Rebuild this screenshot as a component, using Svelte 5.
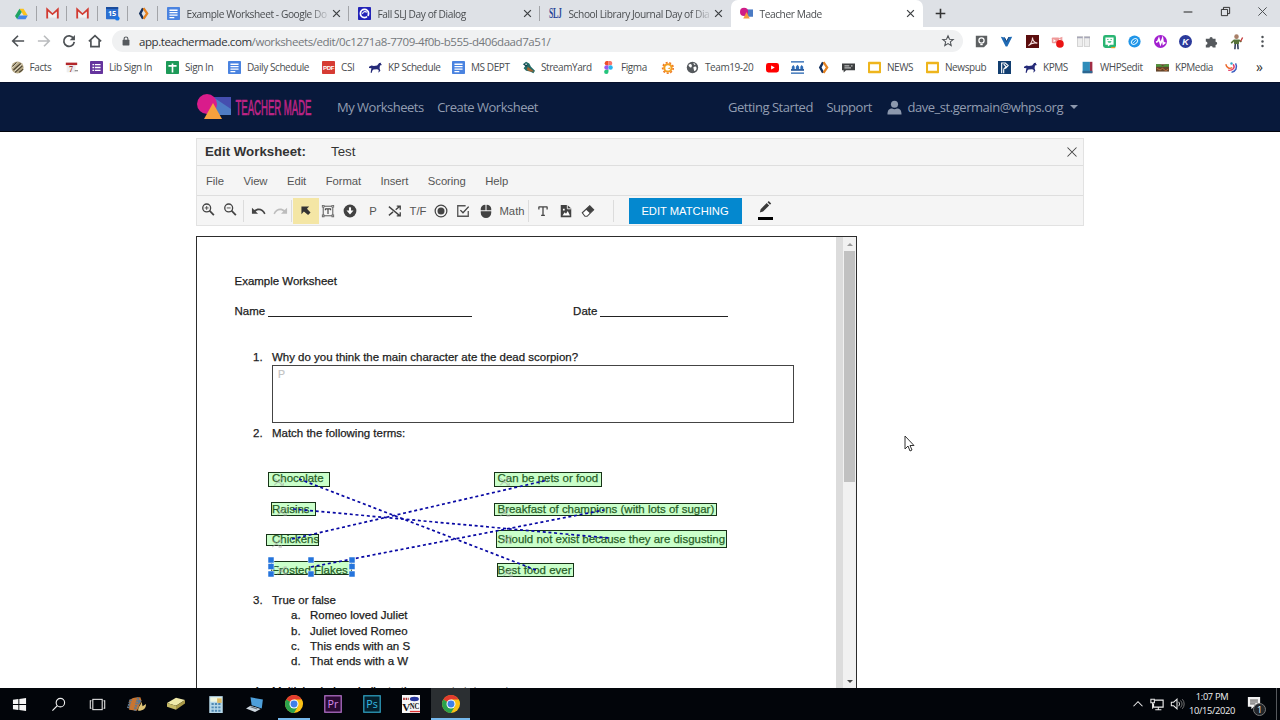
<script lang="ts">
	type Item = { icon?: string; label?: string; w: number; size?: number };

	const doc = '<rect width="16" height="16" rx="1" fill="#4a83e0"/><path d="M3 4h10M3 7h10M3 10h10M3 13h6" stroke="#fff" stroke-width="1.6"/>';
	const gmail = '<path d="M1.500 14V3L8 9l6.500-6v11" fill="none" stroke="#d23a31" stroke-width="2.300"/><path d="M3 13V6l5 4 5-4v7" fill="#f1f1f1"/>';
	const horse = '<path d="M0 7l3-1.500 3 .5 4-.5 2.500-3L15 2l-.5 1.500L16 5l-2.500.5L13 9l1 3-2.500 2.500.3-2L12 11l-2-.8-4.500.3L4 12l-.5 2.500H2l.5-3.500L3 9 0 8.500z" fill="#252a78"/>';
	const slides = '<rect y="1" width="16" height="14" rx="1" fill="#eeb51d"/><rect x="2.500" y="4" width="11" height="8" fill="#fff"/>';
	const orbit = '<path d="M7.500 1.500L4 8l3.500 6.500" fill="none" stroke="#14305e" stroke-width="3"/><path d="M8 1.500L12.500 8 8 14.500" fill="none" stroke="#e58220" stroke-width="2.800"/>';
	const shapes = '<rect x="7" y="3" width="9" height="9" fill="#4b7bc4"/><circle cx="5" cy="6" r="5" fill="#cf1c87"/><path d="M8 6l4 8H4z" fill="#f49a3e"/>';
	const chrome = '<circle cx="8" cy="8" r="8" fill="#fbc116"/><path d="M8 8L1.100 4A8 8 0 0 1 14.900 4z" fill="#e33b2e"/><path d="M8 8L1.100 4A8 8 0 0 0 8 16l3.500-6z" fill="#2ba24c"/><path d="M8 4h6.900L16 8H8z" fill="#fbc116"/><circle cx="8" cy="8" r="4" fill="#fff"/><circle cx="8" cy="8" r="3.100" fill="#3f7fe8"/>';

	const icons: Record<string, string> = {
		doc, gmail, horse, slides, orbit, shapes, chrome,
		drive: '<path d="M5.500 2h5l5.200 8.500h-5z" fill="#fbc31c"/><path d="M5.500 2L0 11l2.700 4L8.300 6z" fill="#1fa463"/><path d="M5.300 10.500h10.400L13 15H2.700z" fill="#4285e8"/>',
		calendar: '<rect width="15" height="15" rx="1" fill="#2c6fd0"/><rect y="0" width="15" height="2.500" fill="#1a4c9c"/><text x="7.500" y="11.500" font-family="Open Sans, sans-serif" font-size="9" font-weight="700" fill="#fff" text-anchor="middle">15</text><circle cx="14" cy="14" r="2.700" fill="#1875e8"/>',
		swirl: '<rect width="16" height="16" rx="1" fill="#2323b8"/><circle cx="8" cy="8" r="5" fill="none" stroke="#fff" stroke-width="2.200"/><path d="M5.500 8.500C6 5.500 9 5 11 6.500" fill="none" stroke="#fff" stroke-width="1.300"/><path d="M11 10l4 3-3 2z" fill="#2323b8"/>',
		slj: '<text transform="translate(0 14) scale(.55 1)" font-family="Liberation Serif, serif" font-size="17" font-weight="700" fill="#2b4698">SLJ</text>',
		facts: '<circle cx="8" cy="8" r="7.500" fill="#b9ab88"/><path d="M2 7l5-5M3 11L12 3M5 14l9-8M10 14l5-4" stroke="#4a4232" stroke-width="1.500"/><path d="M1 9l7-7M4 13l9-9" stroke="#f4efdf" stroke-width="1"/>',
		seven: '<rect x="2" y="3" width="11" height="11" fill="#eee"/><rect x="1" y="2" width="14" height="3" fill="#b3262b"/><text x="5" y="13" font-family="Liberation Serif, serif" font-size="10" font-weight="700" fill="#933">7</text><path d="M12 12h4" stroke="#555"/>',
		form: '<rect width="16" height="16" rx="1" fill="#65349d"/><path d="M3 4.500h2M3 8h2M3 11.500h2M6 4.500h7M6 8h7M6 11.500h7" stroke="#fff" stroke-width="1.700"/>',
		sheet: '<rect width="16" height="16" rx="1" fill="#1d9a58"/><path d="M3 6h10M8 3v11" stroke="#fff" stroke-width="2"/>',
		pdf: '<rect width="16" height="16" rx="1" fill="#d63b33"/><text x="8" y="11" font-family="Liberation Sans, sans-serif" font-size="7.500" font-weight="700" fill="#fff" text-anchor="middle">PDF</text>',
		duck: '<path d="M1 4l4-3 4 2 2 4 5 5-2 3-4-2-5-1-3-3 2-3z" fill="#226b67"/><path d="M7 7l8 6-5 0-4-2z" fill="#a7632e"/><path d="M2 4l3-1 2 2-2 2z" fill="#133d4b"/><circle cx="5" cy="4" r="1" fill="#fff"/>',
		figma: '<path d="M8 0H5.500a2.700 2.700 0 0 0 0 5.300H8z" fill="#ef4e2b"/><path d="M8 0h2.500a2.700 2.700 0 0 1 0 5.300H8z" fill="#f7766b"/><path d="M8 5.300H5.500a2.700 2.700 0 0 0 0 5.400H8z" fill="#9a58ef"/><circle cx="10.600" cy="8" r="2.700" fill="#27b4ef"/><path d="M8 10.700H5.500A2.700 2.700 0 1 0 8 13.300z" fill="#24c47c"/>',
		grafana: '<circle cx="8.500" cy="8.500" r="4.500" fill="none" stroke="#f2a01e" stroke-width="2.600"/><circle cx="8.500" cy="8.500" r="6.500" fill="none" stroke="#f07a22" stroke-width="2" stroke-dasharray="2.500 2"/><path d="M8 9l3-1 0 2z" fill="#f2a01e"/>',
		globe: '<circle cx="8" cy="8" r="7" fill="#55595d"/><path d="M3 5c3-3 5 0 4 2s-3 1-4-2zM9 8c2-2 4-1 4 1s-2 4-3 3zM9 2l3 2-2 1z" fill="#fff"/>',
		youtube: '<rect x="0" y="2.500" width="16" height="11.500" rx="3" fill="#f00"/><path d="M6.300 5.500v5l4.500-2.500z" fill="#fff"/>',
		banner: '<path d="M0 1h16M0 15h16" stroke="#1d5fae" stroke-width="1.500"/><path d="M1 10V7l2-2 1.500 2v3zM6 10V7l2-2.500L10 7v3zM11.500 10V7L13 5l2 2v3z" fill="#2d6cb8"/><path d="M0 11h16" stroke="#144a92" stroke-width="2"/>',
		comment: '<path d="M0 3h16v8.500H5L2 14v-2.500H0z" fill="#3d3f40"/><path d="M3 6h6M3 8.500h8M11 6h2" stroke="#fff" stroke-width="1"/>',
		pmark: '<rect width="16" height="16" fill="#123e70"/><path d="M4.500 15V2.500H9l3.500 3-3.500 4M7 4l3 3-3 3M7 10v5" fill="none" stroke="#fff" stroke-width="1.400"/>',
		book: '<path d="M2 1h9v14H2z" fill="#2f8dba"/><path d="M11 1h3v14h-3z" fill="#a12d44"/><path d="M2 12h12v3H2z" fill="#2d6690"/>',
		photo: '<rect y="4" width="16" height="9" fill="#63452b"/><path d="M0 4h5l3 2 4-2h4v3H0z" fill="#4f963c"/><path d="M1 9l4 2 3-2 4 3 3-2" stroke="#d57742" fill="none"/>',
		arcs: '<path d="M1 4c1 5 5 6 8 4" fill="none" stroke="#ed6a2e" stroke-width="1.800"/><path d="M13 3c3 5 0 10-5 11" fill="none" stroke="#3c5dc0" stroke-width="1.800"/><path d="M10 4c3 4 0 8-6 7.500" fill="none" stroke="#e33f68" stroke-width="1.800"/><circle cx="8" cy="3" r="1.500" fill="#3ac"/>',
		back: '<path d="M15 8H2M8 2L2 8l6 6" fill="none" stroke="#4e5256" stroke-width="1.900"/>',
		forward: '<path d="M1 8h13M8 2l6 6-6 6" fill="none" stroke="#babcbe" stroke-width="1.900"/>',
		reload: '<path d="M13.200 5A6 6 0 1 0 14 9" fill="none" stroke="#4e5256" stroke-width="2"/><path d="M14.800 1v6h-6z" fill="#4e5256"/>',
		home: '<path d="M1 8.500L8 2l7 6.500M3.300 7v7.500h9.400V7" fill="none" stroke="#4e5256" stroke-width="1.900"/>',
		lock: '<rect x="2.500" y="6" width="11" height="9" rx="1" fill="#55595d"/><path d="M5 7V4.500a3 3 0 0 1 6 0V7" fill="none" stroke="#55595d" stroke-width="1.700"/>',
		star: '<path d="M8 2l1.700 4 4.300.3-3.300 2.700 1 4.300L8 11l-3.700 2.300 1-4.300L2 6.300 6.300 6z" fill="none" stroke="#4e5256" stroke-width="1.200"/>',
		keep: '<path d="M1 1h14v10l-4 4H1z" fill="#5d6062"/><circle cx="8" cy="6.800" r="3.200" fill="none" stroke="#fff" stroke-width="1.500"/><path d="M6.500 11.800h3" stroke="#fff" stroke-width="1.500"/>',
		vee: '<path d="M1 2l4.500 1L8 8l3-5.500 4-.5-6 12H7z" fill="#1f6ab4"/><path d="M5.500 3L8 8l3-5.500" fill="none" stroke="#123f78" stroke-width="1.200"/>',
		acrobat: '<rect width="16" height="16" fill="#5b0d0d"/><path d="M3 13c4-3 5-7 5-10 0 4 2 6 6 7-5-1-8 0-11 3z" fill="none" stroke="#f5dcdc" stroke-width="1.300"/>',
		record: '<rect x="1" y="3" width="9" height="7" rx="1" fill="#ef9999"/><path d="M9 4l5-2v5z" fill="#f0a0a0"/><path d="M3 5l3 2-3 2z" fill="#fff"/><circle cx="11" cy="11" r="4.700" fill="#ea1414"/>',
		panes: '<rect x=".5" y="2" width="6.500" height="12" fill="#eee" stroke="#ccc"/><rect x="9" y="2" width="6.500" height="12" fill="#eee" stroke="#ccc"/><path d="M0 3h7M9 3h7" stroke="#a7a7b8" stroke-width="2"/>',
		bitmoji: '<rect width="16" height="16" rx="3" fill="#2ab573"/><path d="M3 3h10v9H9l-3 2v-2H3z" fill="#fff"/><path d="M5.500 7.800a2.600 2.600 0 0 0 5 0z" fill="#2ab573"/><path d="M5.200 5.500h1.500M9.300 5.500h1.500" stroke="#2ab573" stroke-width="1.200"/><path d="M10 15.500h5" stroke="#e99c25" stroke-width="1.500"/>',
		compass: '<circle cx="8" cy="8" r="7.500" fill="#2095e8"/><ellipse cx="8" cy="8" rx="4.200" ry="3" transform="rotate(-40 8 8)" fill="none" stroke="#d5f0ff" stroke-width="1.300"/><path d="M6 10l4-4" stroke="#d5f0ff"/>',
		mote: '<circle cx="8" cy="8" r="8" fill="#a21fcf"/><path d="M2.500 9l2-1L6 4.500 8 11l2.500-6.500L11.500 11l2.500-2" fill="none" stroke="#fff" stroke-width="2"/>',
		kami: '<circle cx="8" cy="8" r="8" fill="#2b3a9b"/><text x="8" y="12" font-family="Liberation Sans, sans-serif" font-size="11" font-style="italic" font-weight="700" fill="#fff" text-anchor="middle">K</text>',
		puzzle: '<path d="M1 4.500h4.500a2 2 0 1 1 4 0H13v3.700a2 2 0 1 1 0 4V15.500H9.500a2 2 0 0 0-4 0H1V12a2 2 0 0 0 0-4z" fill="#55595d"/>',
		avatar: '<circle cx="8" cy="2" r="2.800" fill="#a87f67"/><path d="M4.500 5.500h7l-.5 5.500H5z" fill="#55733a"/><path d="M5 6.500L1.500 10M11 6.500l3 2" stroke="#55733a" stroke-width="2"/><path d="M6.500 11l-.5 6.500M9.500 11l.5 6.500" stroke="#35425e" stroke-width="2"/><path d="M13 8l2.500-5" stroke="#c43434" stroke-width="1.600"/>',
		dots: '<circle cx="8" cy="2.500" r="1.500" fill="#4e5256"/><circle cx="8" cy="8" r="1.500" fill="#4e5256"/><circle cx="8" cy="13.500" r="1.500" fill="#4e5256"/>',
		zoomIn: '<circle cx="6.500" cy="4.500" r="4.500" fill="none" stroke="#444" stroke-width="1.500"/><path d="M9.700 7.700l5 5" stroke="#444" stroke-width="2"/><path d="M4.300 4.500h4.400M6.500 2.300v4.400" stroke="#444"/>',
		zoomOut: '<circle cx="6.500" cy="4.500" r="4.500" fill="none" stroke="#444" stroke-width="1.500"/><path d="M9.700 7.700l5 5" stroke="#444" stroke-width="2"/><path d="M4.300 4.500h4.400" stroke="#444"/>',
		undo: '<path d="M1 5v6.500h6.500L5 9c3-2.500 7-1.500 9 3l1.500-.7C13 5.500 7.500 4.500 3.500 7.500z" fill="#444"/>',
		redo: '<path d="M15 5v6.500H8.500L11 9c-3-2.500-7-1.500-9 3l-1.500-.7C3 5.500 8.500 4.500 12.500 7.500z" fill="#bdbdbd"/>',
		pointer: '<path d="M3 3h9.500L9.800 5.700l4.400 4.800-3 3-5.200-4.200L3 12.500z" fill="#333"/>',
		textbox: '<rect x="2.500" y="2.500" width="11" height="11" fill="none" stroke="#444"/><path d="M5 5.500h6M8 5.500v6M5 5v2M11 5v2" stroke="#444" stroke-width="1.300"/><path d="M1 1h3v3H1zM12 1h3v3h-3zM1 12h3v3H1zM12 12h3v3h-3z" fill="#666"/><path d="M2 2h1v1H2zM13 2h1v1h-1zM2 13h1v1H2zM13 13h1v1h-1z" fill="#fff"/>',
		down: '<circle cx="8" cy="8" r="7.300" fill="#424242"/><path d="M8 3.800v5" stroke="#fff" stroke-width="2.400"/><path d="M4 7.500h8L8 12z" fill="#fff"/>',
		shuffle: '<path d="M1 3l12 10M1 13L5.800 9M8.800 6.500L13 3M10 2.500h4v4M10 13.500h4v-4" fill="none" stroke="#444" stroke-width="1.500"/>',
		radio: '<circle cx="8" cy="8" r="6.700" fill="none" stroke="#444" stroke-width="1.400"/><circle cx="8" cy="8" r="4" fill="#444"/>',
		check: '<path d="M14 8v6H2V2h9" fill="none" stroke="#555" stroke-width="1.500"/><path d="M5 7l3 3 6.500-7" fill="none" stroke="#444" stroke-width="1.600"/>',
		mouse: '<path d="M2 7V5.500A5 5 0 0 1 7.400 1v6zM8.600 1A5 5 0 0 1 14 5.500V7H8.600zM2 8.300h12V10a6 6 0 0 1-12 0z" fill="#424242"/>',
		serifT: '<path d="M2 2.500h12M8 2.500v11M5.500 13.700h5M2.500 2.500v3.500M13.500 2.500v3.500" fill="none" stroke="#444" stroke-width="1.700"/>',
		picture: '<path d="M2 1h7.500L14 5v10H2z" fill="#424242"/><path d="M9.500 1v4.500H14" fill="none" stroke="#fff"/><path d="M4 13l2.500-3.500L8 11l2-3 2.500 5zM4.500 5.500h2v2h-2z" fill="#fff"/>',
		eraser: '<path d="M1.500 10L10 2l4.500 4.500L7 14H4.500z" fill="#fff" stroke="#444" stroke-width="1.200"/><path d="M5.500 6.200L10 2l4.500 4.500-4.300 4.200z" fill="#424242"/>',
		pencil: '<path d="M1 14l1-4 7.500-7.500 3 3L5 13zM10.500 1.500L12 0l3 3-1.500 1.500z" fill="#3a3a3a"/>',
		user: '<circle cx="8" cy="4.500" r="3.800" fill="#8c98ad"/><path d="M.5 15.500c0-5 2-6.500 5-6.500 1.500 1 3.500 1 5 0 3 0 5 1.500 5 6.500z" fill="#8c98ad"/>',
		windows: '<path d="M1 3l5.800-.8v5.300H1zM7.800 2.100L15 1v6.500H7.800zM1 8.500h5.800v5.300L1 13zM7.800 8.500H15V15l-7.200-1.100z" fill="#f5f5f5"/>',
		search: '<circle cx="10" cy="6" r="4.500" fill="none" stroke="#eee" stroke-width="1.200"/><path d="M6.800 9.200L1.500 14.500" stroke="#eee" stroke-width="1.300"/>',
		taskview: '<rect x="3" y="2.500" width="10" height="11" fill="none" stroke="#eee" stroke-width="1.100"/><path d="M1.500 4H.3v8h1.200M14.500 4h1.200v8h-1.200" fill="none" stroke="#eee" stroke-width="1.100"/>',
		film: '<path d="M1 5c3-3 6-3 10-3l1 3-4 9-7-1z" fill="#c87531"/><path d="M2.500 4L0 12M9 2.500L6 14" stroke="#60788e" stroke-width="2.200" stroke-dasharray="1.500 .7"/><path d="M9 14c0-4 2-4 3-8l1 4 3-2c0 4-2 6-7 6z" fill="#ddc376"/><path d="M9 4l3 1-3 4z" fill="#527999"/>',
		scanner: '<path d="M0 7l8-4.500 8 2-8 5z" fill="#efe9a9"/><path d="M0 7l8 2.500v3.500L0 10.500z" fill="#c6b965"/><path d="M8 9.500l8-5v3L8 13z" fill="#a89847"/>',
		calc: '<rect x="2" y="1" width="12" height="15" fill="#b5d7e8"/><rect x="3" y="2" width="10" height="4" fill="#eef5df"/><path d="M4 8h9M4 11h9M4 14h9" stroke="#5089b2" stroke-width="1.600" stroke-dasharray="2 1"/><path d="M9 3h4v4H9z" fill="#dcba62"/>',
		laptop: '<path d="M4 2l11 2-1 8L5 9z" fill="#4e9fda"/><path d="M4 9.500l9 3-5 2.500-8-3z" fill="#ccd6de"/><path d="M4 10.500l6 2" stroke="#66727c"/>',
		pr: '<rect x=".7" y=".7" width="14.600" height="14.600" fill="#2a0a34" stroke="#b572ca" stroke-width="1.100"/><text x="8" y="11.500" font-family="Open Sans, sans-serif" font-size="9.500" fill="#d78ceb" text-anchor="middle">Pr</text>',
		ps: '<rect x=".7" y=".7" width="14.600" height="14.600" fill="#04202d" stroke="#2fa3c4" stroke-width="1.100"/><text x="8" y="11.500" font-family="Open Sans, sans-serif" font-size="9.500" fill="#35bce2" text-anchor="middle">Ps</text>',
		vnc: '<rect width="16" height="16" fill="#f7f7f7"/><text x=".3" y="13.800" font-family="Liberation Serif, serif" font-size="10" font-weight="700" fill="#111">V</text><text transform="translate(6.800 12.800) scale(.85 1)" font-family="Liberation Serif, serif" font-size="7" font-weight="700" fill="#111">NC</text><ellipse cx="11" cy="3.500" rx="4" ry="2" fill="#26359c"/><path d="M1 3.500h5" stroke="#a33" stroke-width="2" stroke-dasharray="1.500 .7"/><path d="M7 14.700h9" stroke="#d33" stroke-width="1.200"/>',
		caret: '<path d="M2 11l6-6 6 6" fill="none" stroke="#eee" stroke-width="1.400"/>',
		network: '<path d="M5.500 3.500H15v8H4V7.500" fill="none" stroke="#eee" stroke-width="1.300"/><path d="M1 2.500h4v4H1zM3 6.500v7M6 14.500h7M9.500 11.500v3" fill="none" stroke="#eee" stroke-width="1.200"/>',
		speaker: '<path d="M1.500 6h2.700L8 2.500v11L4.200 10H1.500z" fill="none" stroke="#eee" stroke-width="1.200"/><path d="M10 5.500a4 4 0 0 1 0 5" fill="none" stroke="#ddd" stroke-width="1.100"/><path d="M12 4a6 6 0 0 1 0 8M14 2.500a8 8 0 0 1 0 11" fill="none" stroke="#777" stroke-width="1.100"/>',
		notice: '<path d="M1 0h14v11H8l-3 3v-3H1z" fill="#f2f2f2"/><path d="M3.500 3.500h9M3.500 5.700h9M3.500 7.900h6" stroke="#222" stroke-width=".9"/>',
		close: '<path d="M2 2l12 12M14 2L2 14" stroke="currentColor" stroke-width="2.200" fill="none"/>',
		thinClose: '<path d="M2 2l12 12M14 2L2 14" stroke="currentColor" stroke-width="1.400" fill="none"/>',
		plus: '<path d="M8 1v14M1 8h14" stroke="#333" stroke-width="2.300"/>',
		minimize: '<path d="M1 8h14" stroke="#222" stroke-width="1.600"/>',
		restore: '<path d="M2 5h9v9H2zM5 5V2h9v9h-3" fill="none" stroke="#222" stroke-width="1.300"/>'
	};

	const pinned = ['drive', 'gmail', 'gmail', 'calendar', 'orbit'];
	const tabs = [
		{ icon: 'doc', title: 'Example Worksheet - Google Do' },
		{ icon: 'swirl', title: 'Fall SLJ Day of Dialog' },
		{ icon: 'slj', title: 'School Library Journal Day of Dia' },
		{ icon: 'shapes', title: 'Teacher Made', active: true }
	];
	const extensions = ['keep', 'vee', 'acrobat', 'record', 'panes', 'bitmoji', 'compass', 'mote', 'kami', 'puzzle', 'avatar', 'dots'];
	const bookmarks: Item[] = [
		{ icon: 'facts', label: 'Facts', w: 54.5 },
		{ icon: 'seven', w: 25 },
		{ icon: 'form', label: 'Lib Sign In', w: 76 },
		{ icon: 'sheet', label: 'Sign In', w: 62 },
		{ icon: 'doc', label: 'Daily Schedule', w: 94 },
		{ icon: 'pdf', label: 'CSI', w: 47 },
		{ icon: 'horse', label: 'KP Schedule', w: 83 },
		{ icon: 'doc', label: 'MS DEPT', w: 70 },
		{ icon: 'duck', label: 'StreamYard', w: 80 },
		{ icon: 'figma', label: 'Figma', w: 59 },
		{ icon: 'grafana', w: 25 },
		{ icon: 'globe', label: 'Team19-20', w: 80 },
		{ icon: 'youtube', w: 25 },
		{ icon: 'banner', w: 26 },
		{ icon: 'orbit', w: 25 },
		{ icon: 'comment', w: 26 },
		{ icon: 'slides', label: 'NEWS', w: 58 },
		{ icon: 'slides', label: 'Newspub', w: 72 },
		{ icon: 'pmark', w: 26 },
		{ icon: 'horse', label: 'KPMS', w: 57 },
		{ icon: 'book', label: 'WHPSedit', w: 75 },
		{ icon: 'photo', label: 'KPMedia', w: 69 },
		{ icon: 'arcs', w: 31 }
	];

	const menus = ['File', 'View', 'Edit', 'Format', 'Insert', 'Scoring', 'Help'];
	// an entry without icon or label is a divider
	const tools: Item[] = [
		{ icon: 'zoomIn', w: 22, size: 14 },
		{ icon: 'zoomOut', w: 22, size: 14 },
		{ w: 5 },
		{ icon: 'undo', w: 24, size: 15 },
		{ icon: 'redo', w: 20, size: 15 },
		{ w: 3 },
		{ icon: 'pointer', w: 25.5, size: 13 },
		{ icon: 'textbox', w: 19, size: 14 },
		{ icon: 'down', w: 25, size: 14 },
		{ label: 'P', w: 21 },
		{ icon: 'shuffle', w: 23, size: 14 },
		{ label: 'T/F', w: 23 },
		{ icon: 'radio', w: 23, size: 14 },
		{ icon: 'check', w: 21, size: 14 },
		{ icon: 'mouse', w: 25, size: 14 },
		{ label: 'Math', w: 27 },
		{ w: 6 },
		{ icon: 'serifT', w: 23, size: 12 },
		{ icon: 'picture', w: 23, size: 14 },
		{ icon: 'eraser', w: 21, size: 14 },
		{ w: 30 }
	];

	const terms = [
		['Chocolate', 'Can be pets or food'],
		['Raisins', 'Breakfast of champions (with lots of sugar)'],
		['Chickens', 'Should not exist because they are disgusting'],
		['Frosted Flakes', 'Best food ever']
	];
	const statements = ['Romeo loved Juliet', 'Juliet loved Romeo', 'This ends with an S', 'That ends with a W'];

	// fields and links live on the canvas, in its own coordinates
	const fields = [
		{ x: 71.5, y: 235.5, w: 61, h: 14 },
		{ x: 74.5, y: 265.5, w: 44, h: 13 },
		{ x: 69.5, y: 297.5, w: 52, h: 11 },
		{ x: 74.5, y: 324.5, w: 80, h: 13 },
		{ x: 297.5, y: 235.5, w: 107, h: 14 },
		{ x: 297.5, y: 266.5, w: 222, h: 12 },
		{ x: 299.5, y: 293.5, w: 230, h: 17 },
		{ x: 300.5, y: 326.5, w: 76, h: 13 }
	];
	const links = [
		[102, 242, 339, 333],
		[96, 272, 412, 301],
		[95, 302, 351, 243],
		[114, 330, 407, 273]
	];
	const handles = [[74, 323], [114, 323], [155, 323], [74, 329.5], [155, 329.5], [74, 337], [114, 337], [155, 337]];

	const taskbar = ['windows', 'search', 'taskview', 'film', 'scanner', 'calc', 'laptop', 'chrome', 'pr', 'ps', 'vnc', 'chrome'];

	let tool = $state('pointer');
</script>

{#snippet icon(name: string, size = 13)}
	<svg class="icon" width={size} height={size} viewBox="0 0 16 16" aria-hidden="true">{@html icons[name]}</svg>
{/snippet}

<div class="screen">
	<div class="tabstrip">
		{#each pinned as name}
			<div class="pin">{@render icon(name)}</div>
		{/each}
		{#each tabs as tab}
			<div class="tab" class:active={tab.active}>
				{@render icon(tab.icon)}
				<span class="title">{tab.title}</span>
				<span class="x">{@render icon('close', 9)}</span>
			</div>
		{/each}
		<span class="newtab">{@render icon('plus', 11)}</span>
		<div class="window-buttons">
			{@render icon('minimize', 10)}
			{@render icon('restore', 11)}
			{@render icon('thinClose', 11)}
		</div>
	</div>

	<div class="addressbar">
		<div class="nav">
			{@render icon('back', 14)}
			{@render icon('forward', 14)}
			{@render icon('reload', 14)}
			{@render icon('home', 14)}
		</div>
		<div class="url">
			{@render icon('lock', 10)}
			<span class="address"><b>app.teachermade.com</b>/worksheets/edit/0c1271a8-7709-4f0b-b555-d406daad7a51/</span>
			{@render icon('star', 14)}
		</div>
		<div class="extensions">
			{#each extensions as name}
				<span>{@render icon(name)}</span>
			{/each}
		</div>
	</div>

	<div class="bookmarks">
		{#each bookmarks as b}
			<div class="bookmark" style:width="{b.w}px">
				{@render icon(b.icon ?? '')}
				{#if b.label}<span>{b.label}</span>{/if}
			</div>
		{/each}
		<span class="more">»</span>
	</div>

	<header class="navbar">
		<div class="brand">
			<svg width="34" height="26" viewBox="0 0 34 26" aria-hidden="true">
				<path d="M16 3h18v18H16z" fill="#4e7cc5" />
				<path d="M16 3h18v12z" fill="#454eaf" />
				<circle cx="10" cy="10" r="10" fill="#d91c8b" />
				<path d="M16 9l9 16H7z" fill="#f7a13e" />
			</svg>
			<svg class="wordmark" width="80" height="28" viewBox="0 0 80 28">
				<text transform="translate(0.5 22) scale(0.435 1)">TEACHER MADE</text>
			</svg>
		</div>
		<nav class="links">
			<span>My Worksheets</span>
			<span>Create Worksheet</span>
		</nav>
		<nav class="links account">
			<span>Getting Started</span>
			<span>Support</span>
			<span class="user">{@render icon('user', 15)}<span>dave_st.germain@whps.org</span><i></i></span>
		</nav>
	</header>

	<main>
		<section class="editor">
			<div class="heading">
				<strong>Edit Worksheet:</strong>
				<span>Test</span>
				<span class="dismiss">{@render icon('thinClose', 12)}</span>
			</div>
			<div class="menubar">
				{#each menus as m}<span>{m}</span>{/each}
			</div>
			<div class="toolbar">
				{#each tools as t}
					{#if t.icon}
						<button class="tool" class:selected={tool === t.icon} style:width="{t.w}px" aria-label={t.icon} onclick={() => (tool = t.icon ?? '')}>
							{@render icon(t.icon, t.size ?? 13)}
						</button>
					{:else if t.label}
						<button class="tool" style:width="{t.w}px">{t.label}</button>
					{:else}
						<div class="divider" style:width="{t.w}px"></div>
					{/if}
				{/each}
				<button class="matching">EDIT MATCHING</button>
				<div class="stroke">{@render icon('pencil', 13)}</div>
			</div>
		</section>

		<section class="viewer">
			<div class="sheet">
				<div class="line">Example Worksheet</div>
				<div class="line"></div>
				<div class="line blanks">
					<span>Name</span><i class="name"></i><span>Date</span><i class="date"></i>
				</div>
				<div class="line"></div>
				<div class="line"></div>
				<div class="line item"><span>1.</span>Why do you think the main character ate the dead scorpion?</div>
				<div class="answer">P</div>
				<div class="line item"><span>2.</span>Match the following terms:</div>
				<div class="line"></div>
				<div class="line"></div>
				{#each terms as [left, right]}
					<div class="line term"><span>{left}</span><span>{right}</span></div>
					<div class="line"></div>
				{/each}
				<div class="line item"><span>3.</span>True or false</div>
				{#each statements as s, i}
					<div class="line sub"><span>{'abcd'[i]}.</span>{s}</div>
				{/each}
				<div class="line"></div>
				<div class="line item"><span>4.</span>Multiple choice - indicate the correct statement</div>

				<svg class="overlay" width="639" height="451" viewBox="0 0 639 451">
					{#each fields as f}
						<rect class="field" x={f.x} y={f.y} width={f.w} height={f.h} />
						<g class="mark" transform="translate({f.x + 5} {f.y + 3.5}) scale(0.7)">
							<path d="M1 3l12 10M1 13L13 3M10 3h4v3M10 13h4v-3" />
						</g>
					{/each}
					{#each links as [x1, y1, x2, y2]}
						<line {x1} {y1} {x2} {y2} />
					{/each}
					{#each handles as [x, y]}
						<rect class="handle" x={x - 3} y={y - 3} width="6" height="6" />
					{/each}
				</svg>
			</div>
			<div class="gutter"></div>
			<div class="scrollbar">
				<i class="up"></i>
				<div class="thumb"></div>
				<i class="down"></i>
			</div>
		</section>

		<svg class="cursor" width="11" height="18" viewBox="0 0 11 18" aria-hidden="true">
			<path d="M1 1v13l3-3 2 5 2-1-2-4.500h4z" fill="#fff" stroke="#333" stroke-width="1" />
		</svg>
	</main>

	<footer class="taskbar">
		{#each taskbar as name, i}
			<div class="task" class:running={name === 'chrome'} class:focused={i === 11}>
				{@render icon(name, i < 3 ? 15 : 18)}
			</div>
		{/each}
		<div class="tray">
			{@render icon('caret', 12)}
			{@render icon('network', 14)}
			{@render icon('speaker', 14)}
			<div class="clock"><span>1:07 PM</span><span>10/15/2020</span></div>
			<div class="notice">{@render icon('notice', 14)}<b>1</b></div>
			<div class="desktop"></div>
		</div>
	</footer>
</div>

<style>
	:global(body) {
		margin: 0;
		background: #fff;
	}

	.screen {
		width: 1280px;
		height: 720px;
		overflow: hidden;
		display: flex;
		flex-direction: column;
		font-family: 'Open Sans', 'Noto Sans', sans-serif;
		color: #4a4d50;
		background: #fff;
	}

	.screen > * { flex: none; }

	.icon {
		display: block;
		flex: none;
		overflow: visible;
	}

	button {
		border: 0;
		padding: 0;
		margin: 0;
		background: none;
		font: inherit;
		color: inherit;
	}

	/* browser chrome */
	.tabstrip {
		height: 27px;
		display: flex;
		background: #dee1e6;
		padding-left: 6.5px;
	}

	.pin {
		width: 30.4px;
		box-sizing: border-box;
		display: flex;
		align-items: center;
		justify-content: center;
		background: linear-gradient(#a2a4a8, #a2a4a8) right 6px / 1px 15px no-repeat;
	}

	.tab {
		width: 191px;
		flex: none;
		box-sizing: border-box;
		display: flex;
		align-items: center;
		padding: 0 8px 0 9px;
		font-size: 10.2px;
		letter-spacing: -0.43px;
		background: linear-gradient(#a2a4a8, #a2a4a8) right 6px / 1px 15px no-repeat;
	}

	.tab:nth-child(8) { background: none; }

	.tab.active {
		background: #fff;
		border-radius: 7px 7px 0 0;
		width: 192px;
	}

	.title {
		flex: 1;
		min-width: 0;
		margin-left: 6px;
		white-space: nowrap;
		mask-image: linear-gradient(90deg, #000 87%, rgba(0, 0, 0, 0.2));
	}

	.x {
		color: #3c3f42;
		padding-left: 5px;
	}

	.newtab {
		align-self: center;
		margin-left: 12px;
	}

	.window-buttons {
		margin-left: auto;
		display: flex;
		gap: 26.5px;
		align-items: center;
		padding: 0 12px 4px 0;
	}

	.addressbar {
		height: 28px;
		display: flex;
		align-items: center;
	}

	.nav {
		width: 101px;
		padding-left: 11px;
		display: flex;
		align-items: center;
		gap: 11.5px;
	}

	.url {
		width: 851px;
		height: 22px;
		box-sizing: border-box;
		display: flex;
		align-items: center;
		padding: 0 8px 0 9px;
		border-radius: 11px;
		background: #f0f1f2;
		font-size: 11.5px;
		letter-spacing: -0.43px;
		color: #74787c;
	}

	.address {
		flex: 1;
		margin-left: 8px;
	}

	.address b {
		font-weight: 400;
		color: #303336;
	}

	.extensions {
		display: flex;
		margin-left: 5.5px;
	}

	.extensions span {
		width: 25.55px;
		display: flex;
		justify-content: center;
	}

	.bookmarks {
		height: 27px;
		display: flex;
		align-items: center;
		padding-left: 10.5px;
		font-size: 10px;
		letter-spacing: -0.42px;
		padding-bottom: 3px;
		box-sizing: border-box;
	}

	.bookmark {
		display: flex;
		align-items: center;
		gap: 6px;
		flex: none;
		white-space: nowrap;
	}

	.more {
		font-size: 14px;
		line-height: 14px;
		color: #333;
	}

	/* site header */
	.navbar {
		height: 50px;
		box-sizing: border-box;
		border-top: 1px solid #06102b;
		border-bottom: 1px solid #01040d;
		background: #08193b;
		padding: 0 202px 0 197px;
		display: flex;
		align-items: center;
	}

	.brand {
		display: flex;
		align-items: center;
		gap: 4px;
		width: 140px;
	}

	.wordmark {
		font-family: 'Liberation Sans', Arial, sans-serif;
		font-size: 22px;
		fill: #bd2485;
		stroke: #bd2485;
		stroke-width: 0.7px;
	}

	.links {
		display: flex;
		gap: 13.5px;
		font-size: 13px;
		letter-spacing: -0.5px;
		color: #929db1;
		white-space: nowrap;
	}

	.account {
		margin-left: auto;
		letter-spacing: -0.46px;
	}

	.user {
		display: flex;
		align-items: center;
		gap: 5px;
		margin-left: 2px;
	}

	.user i {
		border: 4px solid transparent;
		border-top-color: #8c98ad;
		border-bottom: 0;
		margin-left: 2px;
	}

	/* editor */
	main {
		position: relative;
		height: 556px;
		padding: 6px 0 0 196px;
		box-sizing: border-box;
		overflow: hidden;
		font-family: 'Liberation Sans', Arial, sans-serif;
	}

	.editor {
		width: 888px;
		height: 88px;
		box-sizing: border-box;
		border: 1px solid #e2e2e2;
		background: #f5f5f5;
	}

	.heading {
		height: 26px;
		display: flex;
		align-items: center;
		padding: 0 5px 0 8px;
		font-size: 13.3px;
		line-height: 13px;
		color: #333;
		border-bottom: 1px solid #dedede;
	}

	.heading > * { padding-bottom: 1px; }

	.heading strong { width: 126px; }

	.dismiss {
		margin-left: auto;
		color: #444;
	}

	.menubar {
		height: 29px;
		display: flex;
		align-items: center;
		gap: 19.5px;
		padding-left: 9px;
		font-size: 11.3px;
		letter-spacing: -0.07px;
		color: #555;
		border-bottom: 1px solid #dedede;
	}

	.toolbar {
		height: 29px;
		display: flex;
		align-items: center;
		font-size: 11.3px;
		color: #555;
	}

	.tool {
		height: 26px;
		flex: none;
		display: flex;
		align-items: center;
		justify-content: center;
	}

	.tool.selected { background: #f4e6a5; }

	.divider {
		height: 22px;
		flex: none;
		background: linear-gradient(#dcdcdc, #dcdcdc) center / 1px 100% no-repeat;
	}

	.matching {
		width: 113px;
		height: 26px;
		background: #0488cf;
		color: #fff;
		font-size: 11.2px;
	}

	.stroke {
		margin-left: 16px;
		padding-bottom: 3px;
		border-bottom: 3px solid #000;
		width: 15px;
		display: flex;
		justify-content: center;
	}

	/* worksheet */
	.viewer {
		width: 661px;
		height: 460px;
		margin-top: 10px;
		box-sizing: border-box;
		border: 1px solid #2c2c2c;
		display: flex;
	}

	.sheet {
		position: relative;
		width: 639px;
		box-sizing: border-box;
		padding: 36.6px 0 0 37.5px;
		font-size: 11.47px;
		color: #1c1c1c;
		-webkit-text-stroke: 0.25px #1c1c1c;
		overflow: hidden;
	}

	.line {
		height: 15.22px;
		line-height: 15.22px;
		white-space: nowrap;
		display: flex;
	}

	.blanks i {
		height: 12px;
		border-bottom: 1.5px solid #222;
		margin-left: 3px;
	}

	.name {
		width: 204px;
		margin-right: 101px;
	}

	.date { width: 128px; }

	.item { padding-left: 18.5px; }
	.item span { width: 19px; }

	.sub { padding-left: 56.5px; }
	.sub span { width: 19px; }

	.term { padding-left: 37.5px; }
	.term span:first-child { width: 225.5px; }

	.answer {
		width: 522px;
		height: 58px;
		box-sizing: border-box;
		margin: 0.4px 0 2.48px 37.5px;
		border: 1px solid #444;
		padding: 2px 5px;
		color: #c2c2c2;
		-webkit-text-stroke: 0.2px #c2c2c2;
		font-size: 10.5px;
	}

	.overlay {
		position: absolute;
		inset: 0;
	}

	.field {
		fill: rgba(60, 255, 60, 0.27);
		stroke: #173317;
		stroke-width: 1;
	}

	.mark {
		fill: none;
		stroke: #a5a5a5;
		stroke-width: 1.6;
		opacity: 0.6;
	}

	.overlay line {
		stroke: #0808a4;
		stroke-width: 1.7;
		stroke-dasharray: 3 2.7;
	}

	.handle {
		fill: #2574dc;
		stroke: #fff;
		stroke-width: 0.5;
	}

	.gutter {
		width: 7px;
		background: #dcdcdc;
	}

	.scrollbar {
		width: 13px;
		height: 451px;
		background: #f1f1f1;
		display: flex;
		flex-direction: column;
		align-items: center;
	}

	.scrollbar i {
		border: 3px solid transparent;
	}

	.scrollbar .up {
		border-bottom-color: #999;
		border-top: 0;
		margin: 6px 0 5px;
	}

	.scrollbar .down {
		border-top-color: #444;
		border-bottom: 0;
		margin: auto 0 5px;
	}

	.thumb {
		width: 11px;
		height: 231px;
		background: #c1c1c1;
	}

	.cursor {
		position: absolute;
		left: 904px;
		top: 303px;
	}

	/* taskbar */
	.taskbar {
		height: 32px;
		background: #02050a;
		display: flex;
	}

	.task {
		width: 39.2px;
		display: flex;
		align-items: center;
		justify-content: center;
	}

	.running { background: linear-gradient(#76b9ed, #76b9ed) center bottom / 32px 2px no-repeat; }

	.focused {
		background: linear-gradient(#76b9ed, #76b9ed) center bottom / 100% 2px no-repeat, #2b2f32;
	}

	.tray {
		margin-left: auto;
		width: 148px;
		display: flex;
		align-items: center;
		gap: 6px;
	}

	.clock {
		display: flex;
		flex-direction: column;
		align-items: center;
		width: 52px;
		margin-left: -4px;
		font-size: 9.3px;
		line-height: 14.5px;
		letter-spacing: -0.35px;
		color: #f0f0f0;
	}

	.notice {
		position: relative;
		padding-left: 3px;
	}

	.notice b {
		position: absolute;
		left: 9px;
		top: 6px;
		width: 13px;
		height: 13px;
		border-radius: 50%;
		background: #22262a;
		border: 1px solid #777;
		box-sizing: border-box;
		color: #fff;
		font-size: 9px;
		font-weight: 400;
		line-height: 11px;
		text-align: center;
	}

	.desktop {
		width: 1px;
		height: 32px;
		margin: 0 3px 0 auto;
		background: #55585c;
	}
</style>
